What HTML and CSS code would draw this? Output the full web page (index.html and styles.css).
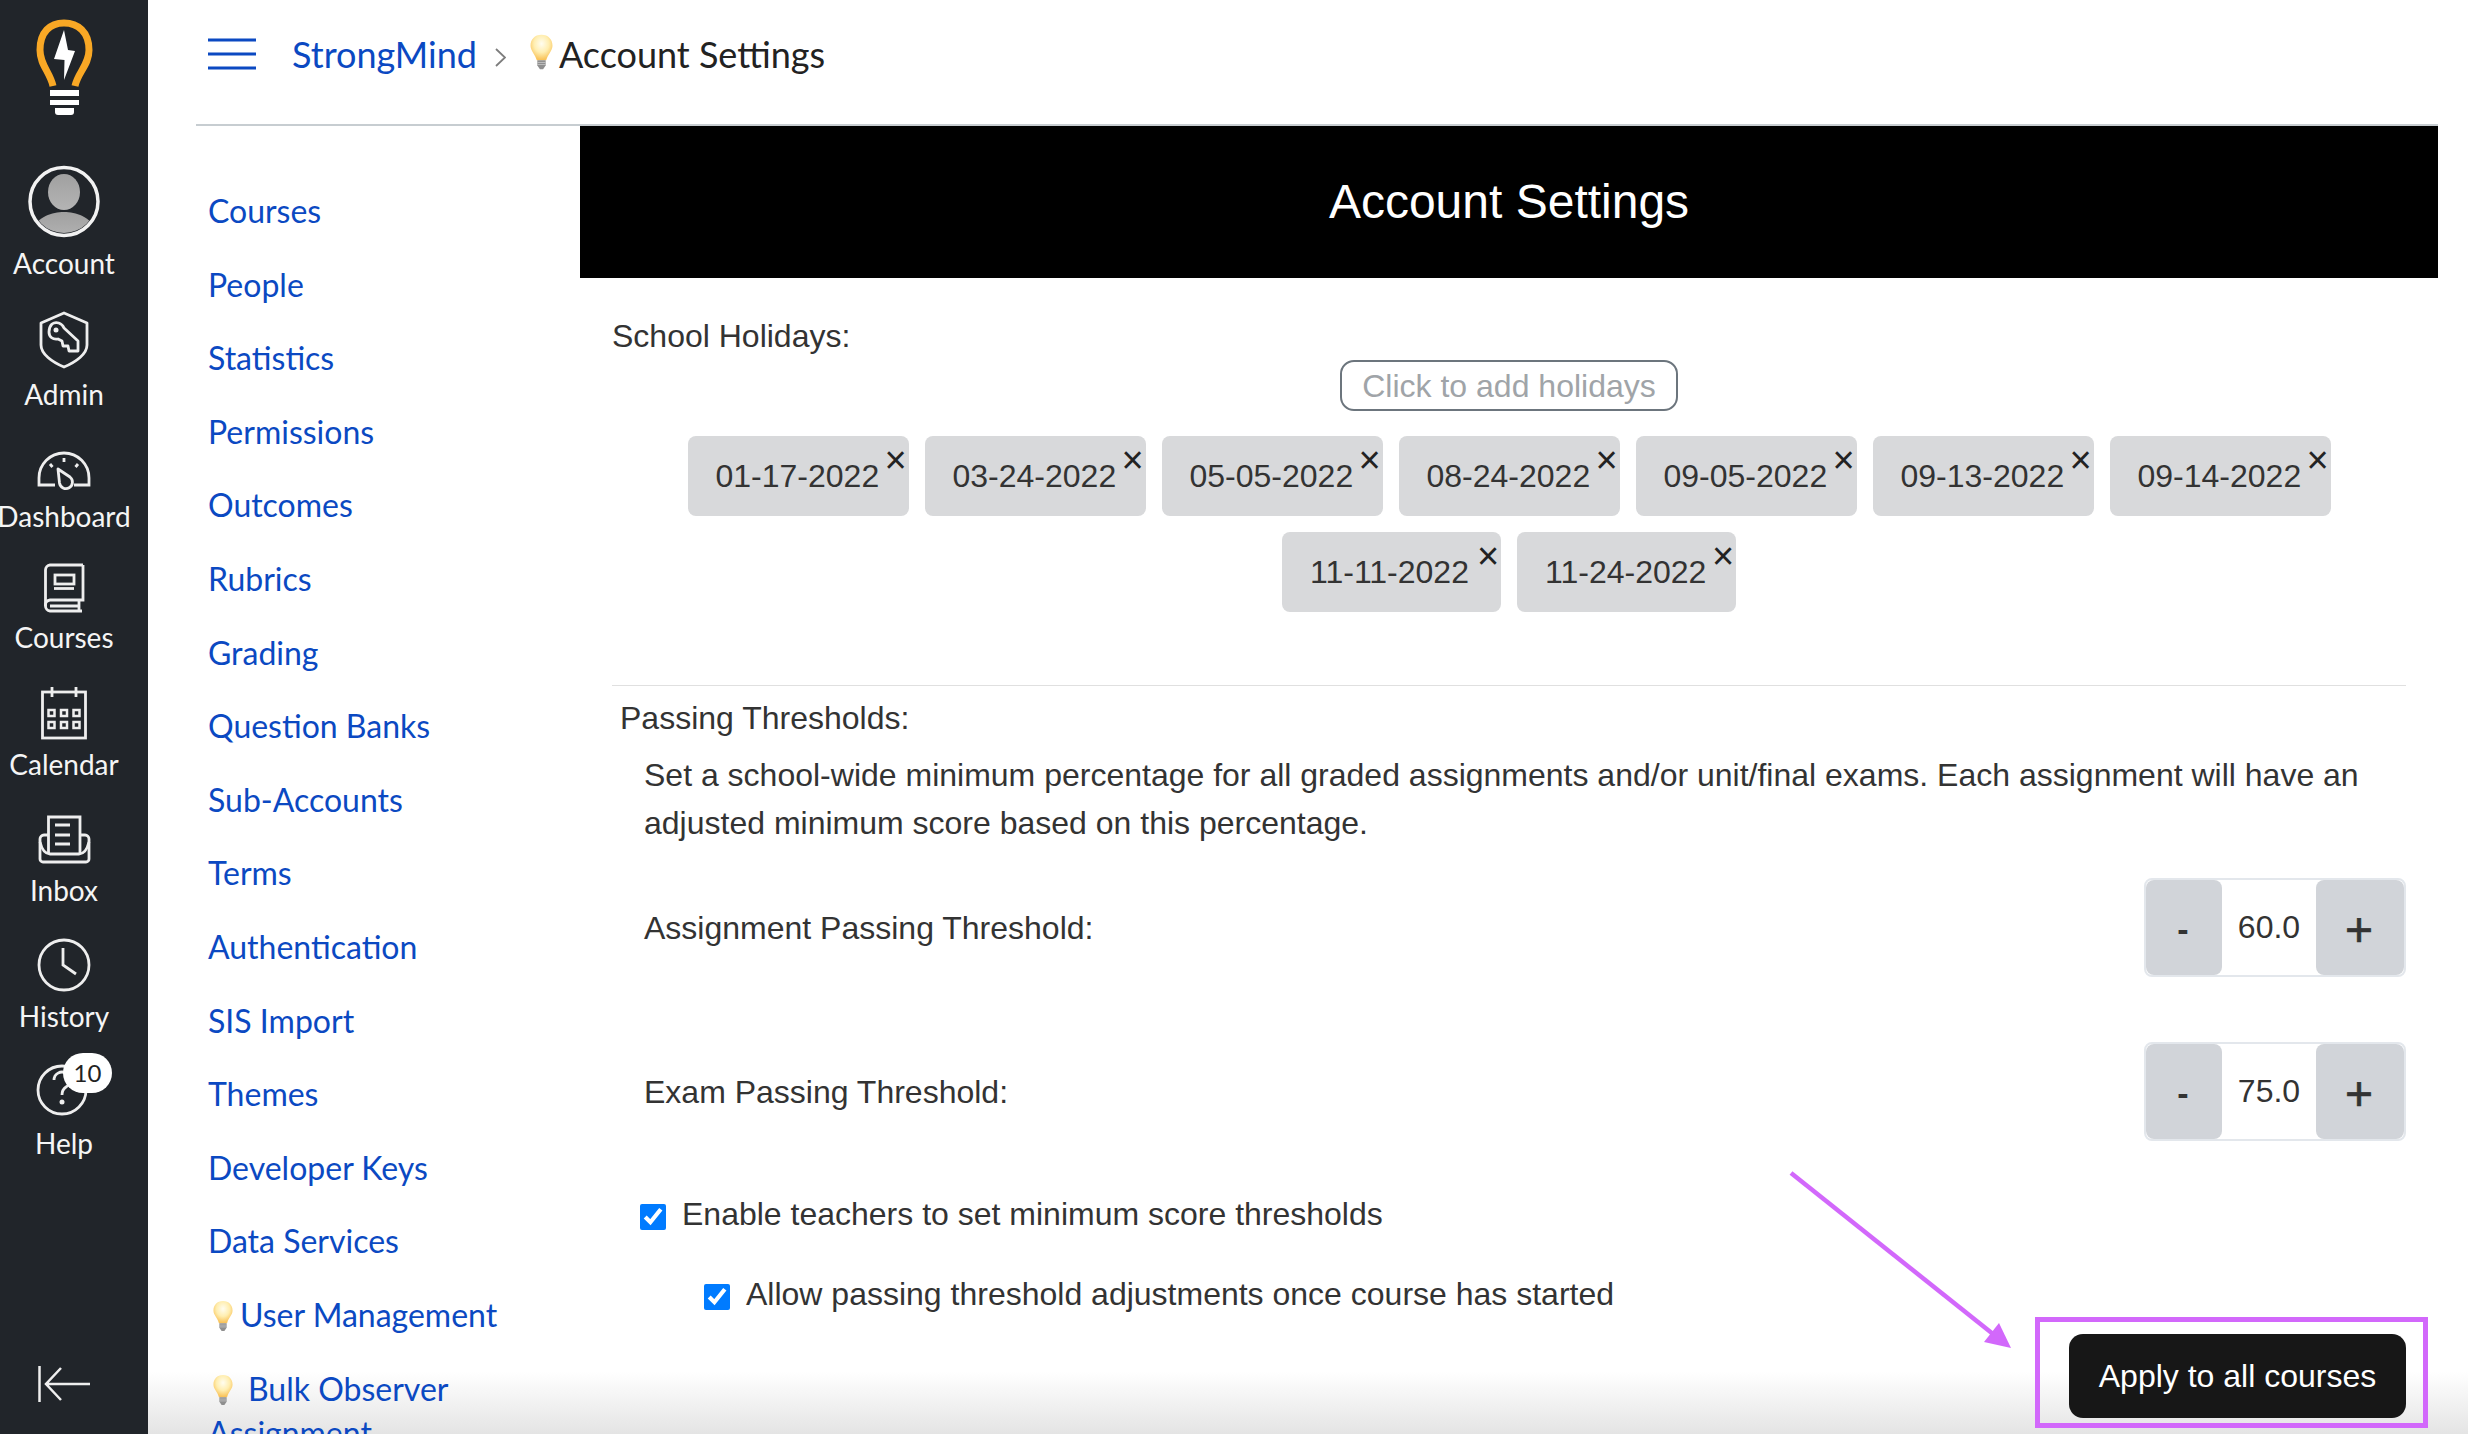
FILE: index.html
```html
<!DOCTYPE html>
<html lang="en">
<head>
<meta charset="utf-8">
<title>Account Settings</title>
<link rel="stylesheet" href="styles.css">
</head>
<body>
<svg class="defs" width="0" height="0" aria-hidden="true">
  <defs>
    <radialGradient id="glow" cx="50%" cy="35%" r="62%">
      <stop offset="0" stop-color="#fffdf0"/>
      <stop offset="0.55" stop-color="#ffeeb0"/>
      <stop offset="1" stop-color="#f9c35a"/>
    </radialGradient>
    <linearGradient id="person" x1="0" y1="0" x2="0" y2="1">
      <stop offset="0" stop-color="#a0a0a0"/>
      <stop offset="1" stop-color="#b4b4b4"/>
    </linearGradient>
    <clipPath id="avatarClip"><circle cx="64" cy="201" r="32"/></clipPath>
    <symbol id="bulb" viewBox="0 0 22 34">
      <path d="M11 0.500C17.500 0.500 21.500 5 21.500 11C21.500 16 17 19 15.500 25H6.500C5 19 0.500 16 0.500 11C0.500 5 4.500 0.500 11 0.500Z" fill="url(#glow)"/>
      <path d="M7 25H15V30L12.500 33.500H9.500L7 30Z" fill="#8f8f8f"/>
      <path d="M7 27H15M7 29H15" stroke="#c8c8c8" stroke-width="0.800"/>
    </symbol>
  </defs>
</svg>
<div class="app">
  <aside class="rail">
    <svg class="rail-svg" width="128" height="140" viewBox="0 0 128 140">
      <path d="M53 86C50 72 40 65 40 50C40 32 50 23 64 23C78 23 89 32 89 50C89 65 78 72 75 86" fill="none" stroke="#f9a825" stroke-width="7"/>
      <path d="M64 30L68 50L75 51L64 80L64.500 60L54 59Z" fill="#fff"/>
      <rect x="50" y="90" width="29" height="6" fill="#fff"/>
      <rect x="50" y="100" width="29" height="5" fill="#fff"/>
      <path d="M55 108H74V112A3 3 0 0 1 71 115H58A3 3 0 0 1 55 112Z" fill="#fff"/>
    </svg>
    <a class="rail-item">
      <svg class="rail-svg" width="128" height="106" viewBox="0 140 128 106">
        <g clip-path="url(#avatarClip)">
          <ellipse cx="64" cy="192" rx="16" ry="18" fill="url(#person)"/>
          <path d="M30 240C32 218 50 212 64 212C78 212 96 218 98 240Z" fill="url(#person)"/>
        </g>
        <circle cx="64" cy="201.500" r="34" fill="none" stroke="#f2f2f2" stroke-width="3.500"/>
      </svg>
      <span class="rail-label">Account</span>
    </a>
    <a class="rail-item">
      <svg class="rail-svg" width="128" height="95" viewBox="0 282 128 95">
        <g fill="none" stroke="#eee" stroke-width="2.800" stroke-linejoin="round">
          <path d="M64 313L87 323V345C87 354 76 362 64 367C52 362 41 354 41 345V323Z"/>
          <path d="M52 324C56 321 62 323 64 328L78 341V351H69L68 346H63L62 341L58 339C53 340 49 337 49 332C49 328 50 326 52 324Z"/>
        </g>
        <circle cx="56" cy="330" r="2.500" fill="#eee"/>
      </svg>
      <span class="rail-label">Admin</span>
    </a>
    <a class="rail-item">
      <svg class="rail-svg" width="128" height="86" viewBox="0 413 128 86">
        <g fill="none" stroke="#eee" stroke-width="2.800">
          <path d="M55 485H39V478A25 25 0 0 1 89 478V485H74"/>
          <path d="M64 458V462M50 464L52.500 467M78 464L75.500 467"/>
          <path d="M58 469L70 477A6.500 6.500 0 1 1 59.500 483Z" stroke-linejoin="round"/>
        </g>
      </svg>
      <span class="rail-label">Dashboard</span>
    </a>
    <a class="rail-item">
      <svg class="rail-svg" width="128" height="85" viewBox="0 535 128 85">
        <g fill="none" stroke="#eee" stroke-width="2.800">
          <path d="M83 565H50A5 5 0 0 0 45.500 570V606A5 5 0 0 0 50 611H82"/>
          <path d="M83 565V600H50A5 5 0 0 0 45.500 606"/>
          <path d="M50 606H78M79 600V611"/>
          <rect x="55" y="575" width="19" height="9"/>
          <path d="M54 588.500H74"/>
        </g>
      </svg>
      <span class="rail-label">Courses</span>
    </a>
    <a class="rail-item">
      <svg class="rail-svg" width="128" height="91" viewBox="0 656 128 91">
        <g fill="none" stroke="#eee" stroke-width="2.800">
          <rect x="42.500" y="692" width="43" height="46"/>
          <path d="M52 687V697M76 687V697"/>
          <g stroke-width="2.500">
            <rect x="48.500" y="710" width="6" height="6"/>
            <rect x="61" y="710" width="6" height="6"/>
            <rect x="73.500" y="710" width="6" height="6"/>
            <rect x="48.500" y="722" width="6" height="6"/>
            <rect x="61" y="722" width="6" height="6"/>
            <rect x="73.500" y="722" width="6" height="6"/>
          </g>
        </g>
      </svg>
      <span class="rail-label">Calendar</span>
    </a>
    <a class="rail-item">
      <svg class="rail-svg" width="128" height="90" viewBox="0 783 128 90">
        <g fill="none" stroke="#eee" stroke-width="2.800">
          <path d="M48.500 853V817H80V853"/>
          <path d="M55 825H70M55 835H70M55 844H70"/>
          <path d="M48 835H44A4 4 0 0 0 40 839V859A3 3 0 0 0 43 862H86A3 3 0 0 0 89 859V839A4 4 0 0 0 85 835H80"/>
          <path d="M40 842C42 850 46 854 50 854H79C83 854 87 850 89 842"/>
        </g>
      </svg>
      <span class="rail-label">Inbox</span>
    </a>
    <a class="rail-item">
      <svg class="rail-svg" width="128" height="90" viewBox="0 909 128 90">
        <g fill="none" stroke="#eee" stroke-width="2.800">
          <circle cx="64" cy="965" r="25"/>
          <path d="M63 948V965L76 974"/>
        </g>
      </svg>
      <span class="rail-label">History</span>
    </a>
    <a class="rail-item">
      <svg class="rail-svg" width="128" height="91" viewBox="0 1035 128 91">
        <g fill="none" stroke="#eee" stroke-width="2.800">
          <circle cx="62" cy="1090" r="24"/>
          <path d="M54 1080A8 8 0 1 1 66 1087C63 1089 62 1091 62 1095"/>
        </g>
        <circle cx="62" cy="1102" r="2.500" fill="#eee"/>
      </svg>
      <span class="rail-label">Help</span>
      <span class="badge">10</span>
    </a>
    <svg class="rail-svg collapse" width="128" height="48" viewBox="0 1360 128 48">
      <g fill="none" stroke="#eee" stroke-width="2.500">
        <path d="M39.500 1366V1402"/>
        <path d="M90 1384H47M61 1368L46 1384L61 1400"/>
      </g>
    </svg>
  </aside>

  <div class="main">
    <div class="fade"></div>
    <header class="topbar">
      <svg class="burger" width="48" height="32" viewBox="0 0 48 32">
        <path d="M0 2H48M0 16H48M0 30H48" stroke="#0b49c2" stroke-width="3"/>
      </svg>
      <a class="crumb">StrongMind</a>
      <svg class="chevron" width="11" height="19" viewBox="0 0 11 19">
        <path d="M1 1L10 9.500L1 18" fill="none" stroke="#7d7d7d" stroke-width="1.800"/>
      </svg>
      <svg class="crumb-bulb" width="23" height="36"><use href="#bulb"/></svg>
      <span class="crumb-current">Account Settings</span>
    </header>

    <div class="body">
      <nav class="subnav">
        <a>Courses</a>
        <a>People</a>
        <a>Statistics</a>
        <a>Permissions</a>
        <a>Outcomes</a>
        <a>Rubrics</a>
        <a>Grading</a>
        <a>Question Banks</a>
        <a>Sub-Accounts</a>
        <a>Terms</a>
        <a>Authentication</a>
        <a>SIS Import</a>
        <a>Themes</a>
        <a>Developer Keys</a>
        <a>Data Services</a>
        <a class="with-bulb"><svg class="nav-bulb" width="20" height="32"><use href="#bulb"/></svg>User Management</a>
        <a class="wrapped"><svg class="nav-bulb wide" width="20" height="32"><use href="#bulb"/></svg>Bulk Observer Assignment</a>
      </nav>

      <section class="settings">
        <h1 class="banner">Account Settings</h1>
        <div class="panel">
          <div class="label-line">School Holidays:</div>
          <div class="add-wrap"><button class="add-btn">Click to add holidays</button></div>
          <div class="tags">
            <span class="tag">01-17-2022<i class="tag-x">×</i></span>
            <span class="tag">03-24-2022<i class="tag-x">×</i></span>
            <span class="tag">05-05-2022<i class="tag-x">×</i></span>
            <span class="tag">08-24-2022<i class="tag-x">×</i></span>
            <span class="tag">09-05-2022<i class="tag-x">×</i></span>
            <span class="tag">09-13-2022<i class="tag-x">×</i></span>
            <span class="tag">09-14-2022<i class="tag-x">×</i></span>
            <span class="tag short">11-11-2022<i class="tag-x">×</i></span>
            <span class="tag short">11-24-2022<i class="tag-x">×</i></span>
          </div>
          <hr class="rule">
          <div class="label-line thresholds">Passing Thresholds:</div>
          <p class="blurb">Set a school-wide minimum percentage for all graded assignments and/or unit/final exams. Each assignment will have an adjusted minimum score based on this percentage.</p>
          <div class="threshold first">
            <span>Assignment Passing Threshold:</span>
            <div class="stepper"><button class="step minus">-</button><span class="step-val">60.0</span><button class="step plus">+</button></div>
          </div>
          <div class="threshold">
            <span>Exam Passing Threshold:</span>
            <div class="stepper"><button class="step minus">-</button><span class="step-val">75.0</span><button class="step plus">+</button></div>
          </div>
          <label class="check first-check"><input type="checkbox" checked>Enable teachers to set minimum score thresholds</label>
          <label class="check nested"><input type="checkbox" checked>Allow passing threshold adjustments once course has started</label>
          <div class="apply-row"><button class="apply">Apply to all courses</button></div>
        </div>
      </section>
    </div>
  </div>
</div>
<div class="callout-box"></div>
<svg class="callout-arrow" width="240" height="190" viewBox="1780 1165 240 190">
  <path d="M1791 1173L1993 1334" stroke="#d268fb" stroke-width="4.500" fill="none"/>
  <path d="M2011 1348L1999 1323L1984 1342Z" fill="#d268fb"/>
</svg>
</body>
</html>
```

FILE: styles.css
```css
* { box-sizing: border-box; }
html, body { margin: 0; height: 100%; overflow: hidden; background: #fff; }
body { position: relative; font-family: "Liberation Sans", Arial, sans-serif; color: #333; }
.defs { position: absolute; }
.app { display: flex; height: 1434px; }

.rail {
  flex: 0 0 148px;
  width: 148px;
  height: 1434px;
  padding-right: 20px;
  background: #21252a;
  color: #f5f5f5;
  display: flex;
  flex-direction: column;
  font-family: Lato, sans-serif;
}
.rail-svg { display: block; flex: none; }
.rail-item { position: relative; display: flex; flex-direction: column; align-items: center; }
.rail-label { display: block; height: 36px; line-height: 35px; font-size: 28px; white-space: nowrap; }
.collapse { margin-top: auto; margin-bottom: 26px; }
.badge {
  position: absolute;
  left: 63px;
  top: 18px;
  width: 49px;
  height: 40px;
  border-radius: 20px;
  background: #fff;
  color: #222;
  font-size: 24px;
  line-height: 40px;
  text-align: center;
}

.main { position: relative; flex: 1; min-width: 0; padding: 0 30px 0 48px; }
.topbar {
  position: relative;
  height: 126px;
  border-bottom: 2px solid #c7cdd1;
  padding-left: 12px;
  display: flex;
  align-items: center;
  font-family: Lato, sans-serif;
  font-size: 36px;
}
.burger { flex: none; margin-top: -16px; }
.crumb { margin-left: 36px; color: #0b49c2; margin-top: -16px; }
.chevron { flex: none; margin-left: 18px; margin-top: -10px; }
.crumb-bulb { flex: none; margin-left: 24px; margin-top: -20px; }
.crumb-current { margin-left: 6px; color: #222; margin-top: -16px; }

.body { position: relative; display: flex; height: 1308px; }
.subnav {
  flex: 0 0 384px;
  padding: 63px 0 0 12px;
  display: flex;
  flex-direction: column;
  gap: 29.6px;
  font-family: Lato, sans-serif;
  font-size: 32px;
  line-height: 44px;
  color: #0b49c2;
}
.subnav a { display: block; }
.nav-bulb { vertical-align: -5px; margin-left: 5px; margin-right: 7px; }
.nav-bulb.wide { margin-right: 15px; }

.settings { flex: 1; min-width: 0; font-size: 32px; }
.banner {
  margin: 0;
  height: 152px;
  background: #000;
  color: #fff;
  font-size: 48px;
  font-weight: 400;
  line-height: 152px;
  text-align: center;
}
.panel { padding: 34px 32px 0; line-height: 48px; }
.add-wrap { display: flex; justify-content: center; }
.add-btn {
  width: 338px;
  height: 51px;
  padding: 1px 0 0;
  border: 2px solid #6c757d;
  border-radius: 14px;
  background: #fff;
  color: #a0a4a8;
  font: inherit;
  line-height: 45px;
}
.tags { margin-top: 25px; display: flex; flex-wrap: wrap; justify-content: center; gap: 16px; }
.tag {
  position: relative;
  width: 221px;
  height: 80px;
  padding-left: 28px;
  border-radius: 8px;
  background: #d8d9db;
  line-height: 80px;
  white-space: nowrap;
}
.tag.short { width: 219px; }
.tag-x {
  position: absolute;
  right: 1px;
  top: 12px;
  width: 24px;
  height: 24px;
  font-style: normal;
  font-size: 38px;
  line-height: 24px;
  text-align: center;
  color: #222;
}
.rule { margin: 73px 0 0; border: 0; border-top: 1px solid #e0e0e0; height: 1px; }
.thresholds { margin-top: 8px; padding-left: 8px; }
.blurb { margin: 9px 0 0; padding: 0 16px 0 32px; }
.threshold { display: flex; justify-content: space-between; align-items: center; padding-left: 32px; margin-top: 65px; height: 99px; }
.threshold.first { margin-top: 31px; }
.stepper {
  width: 262px;
  height: 99px;
  border: 2px solid #e3e7ec;
  border-radius: 8px;
  display: flex;
  align-items: stretch;
}
.step {
  border: 0;
  border-radius: 8px;
  background: #d1d4d9;
  color: #333;
  font-family: inherit;
}
.step.minus { width: 76px; padding: 4px 2px 0 0; font-size: 34px; font-weight: 700; }
.step.plus { width: 88px; padding: 3px 2px 0 0; font-size: 48px; font-weight: 400; -webkit-text-stroke: 0.7px #333; }
.step-val { flex: 1; text-align: center; line-height: 95px; }
.check { display: flex; align-items: center; height: 48px; }
.check input { width: 26px; height: 26px; margin: 6px 16px 0 0; accent-color: #007bff; }
.first-check { margin-top: 49px; padding-left: 28px; }
.nested { margin-top: 32px; padding-left: 92px; }
.apply-row { display: flex; justify-content: flex-end; margin-top: 16px; }
.apply {
  width: 337px;
  height: 84px;
  padding: 0;
  border: 0;
  border-radius: 14px;
  background: #171717;
  color: #fff;
  font: inherit;
}

.fade {
  position: absolute;
  left: 0;
  right: 0;
  bottom: 0;
  height: 62px;
  background: linear-gradient(rgba(228,228,228,0), rgba(228,228,228,1));
  pointer-events: none;
}
.callout-box {
  position: absolute;
  left: 2035px;
  top: 1317px;
  width: 393px;
  height: 111px;
  border: 5px solid #d268fb;
}
.callout-arrow { position: absolute; left: 1780px; top: 1165px; }
```
